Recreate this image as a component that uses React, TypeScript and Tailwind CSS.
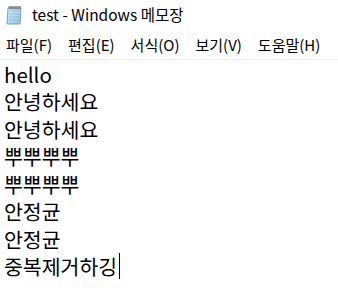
import React from 'react';

const lines = ['hello', '안녕하세요', '안녕하세요', '뿌뿌뿌뿌', '뿌뿌뿌뿌', '안정균', '안정균', '중복제거하깅'];
const menus = ['파일(F)', '편집(E)', '서식(O)', '보기(V)', '도움말(H)'];

function NotepadIcon() {
  return (
    <svg width="16" height="19" viewBox="0 0 16 19">
      <defs>
        <linearGradient id="pad" x1="0" y1="0" x2="1" y2="1">
          <stop offset="0" stopColor="#d9eefb" />
          <stop offset="1" stopColor="#8cc4e8" />
        </linearGradient>
      </defs>
      <path d="M2 2 L15 2 L14 18 L1 18 Z" fill="url(#pad)" stroke="#5a8fb8" strokeWidth="0.8" />
      {[5, 8, 11, 14].map((y) => (
        <line key={y} x1="3" y1={y} x2="13" y2={y} stroke="#7fb0d4" strokeWidth="0.6" />
      ))}
      <rect x="2" y="0.5" width="13" height="2.5" fill="#9aa9b4" />
      {[4, 6, 8, 10, 12, 14].map((x) => (
        <line key={x} x1={x} y1="0" x2={x} y2="3.5" stroke="#5d6770" strokeWidth="0.8" />
      ))}
    </svg>
  );
}

export default function App() {
  return (
    <div className="w-[338px] h-[298px] bg-white overflow-hidden text-black" style={{ fontFamily: '"Noto Sans CJK KR", "Noto Sans", sans-serif' }}>
      {/* title bar */}
      <div className="h-[30px] flex items-center pl-[6px]">
        <NotepadIcon />
        <span className="ml-[10px] text-[15.5px] leading-none">test - Windows 메모장</span>
      </div>

      {/* menu bar */}
      <div className="h-[30px] flex items-center gap-[16px] pl-[6px] border-b border-[#f0f0f0]">
        {menus.map((m) => (
          <span key={m} className="text-[15px] leading-none">{m}</span>
        ))}
      </div>

      {/* text area */}
      <div className="pl-[4px]">
        {lines.map((l, i) => (
          <div key={i} className="h-[27.5px] flex items-center text-[20.5px] leading-none">
            {l}
            {i === lines.length - 1 && <span className="ml-[2px] w-[1px] h-[26px] bg-black" />}
          </div>
        ))}
      </div>
    </div>
  );
}
